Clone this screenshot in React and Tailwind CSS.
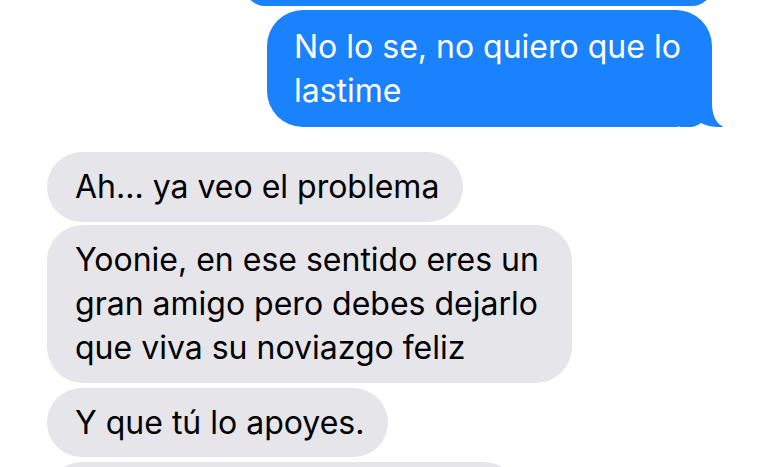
import React from "react";

function Tail() {
  return (
    <svg
      className="absolute left-[413px] top-[80px]"
      width="44"
      height="37"
      viewBox="0 0 44 37"
    >
      <path
        d="M0 37 H12 C15 36.5 18 35 21 33 C27 36 35 37.6 43.5 37 C36 33 32 26 32 12 V0 H0 Z"
        fill="#1982FC"
      />
    </svg>
  );
}

export default function App() {
  return (
    <div className="w-[760px] h-[467px] overflow-hidden bg-white flex flex-col font-['Inter','Liberation_Sans',sans-serif] text-[32px] leading-[44px]">
      <div className="self-end mr-[48px] mt-[-34px] w-[467px] h-[40px] shrink-0 rounded-[36px] bg-[#1982FC]" />
      <div className="relative self-end mr-[48px] mt-[4px] w-[445px] h-[117px] shrink-0 rounded-[36px] bg-[#1982FC] pl-[27px] pt-[15px] text-white whitespace-nowrap">
        No lo se, no quiero que lo
        <br />
        lastime
        <Tail />
      </div>
      <div className="ml-[47px] mt-[25px] w-[416px] h-[70px] shrink-0 rounded-[35px] bg-[#E5E5EA] pl-[28px] pt-[13px] text-black whitespace-nowrap">
        Ah... ya veo el problema
      </div>
      <div className="ml-[47px] mt-[3px] w-[525px] h-[158px] shrink-0 rounded-[36px] bg-[#E5E5EA] pl-[28px] pt-[13px] text-black whitespace-nowrap">
        Yoonie, en ese sentido eres un
        <br />
        gran amigo pero debes dejarlo
        <br />
        que viva su noviazgo feliz
      </div>
      <div className="ml-[47px] mt-[5px] w-[341px] h-[69px] shrink-0 rounded-[35px] bg-[#E5E5EA] pl-[28px] pt-[13px] text-black whitespace-nowrap">
        Y que tú lo apoyes.
      </div>
      <div className="ml-[47px] mt-[5px] w-[472px] h-[70px] shrink-0 rounded-[35px] bg-[#E5E5EA]" />
    </div>
  );
}
